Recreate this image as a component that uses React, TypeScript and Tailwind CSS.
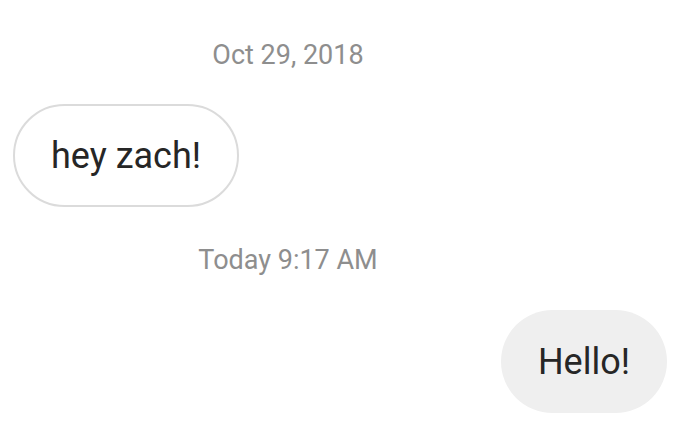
import React from "react";

export default function App() {
    return (
        <div className="w-[700px] h-[434px] bg-white overflow-hidden font-['Roboto',sans-serif]">
            <div className="flex flex-col">
                <div className="h-[104px] flex items-center justify-center pt-[6px] pr-[124px]">
                    <span className="text-[27px] text-[#8e8e8e]">Oct 29, 2018</span>
                </div>

                <div className="flex justify-start pl-[13px]">
                    <div className="h-[103px] px-[36px] rounded-full border-2 border-[#dbdbdb] flex items-center">
                        <span className="text-[36px] text-[#262626]">hey zach!</span>
                    </div>
                </div>

                <div className="h-[103px] flex items-center justify-center pt-[4px] pr-[124px]">
                    <span className="text-[27px] text-[#8e8e8e]">Today 9:17 AM</span>
                </div>

                <div className="flex justify-end pr-[33px]">
                    <div className="h-[103px] px-[37px] rounded-full bg-[#efefef] flex items-center">
                        <span className="text-[36px] text-[#262626]">Hello!</span>
                    </div>
                </div>
            </div>
        </div>
    );
}
